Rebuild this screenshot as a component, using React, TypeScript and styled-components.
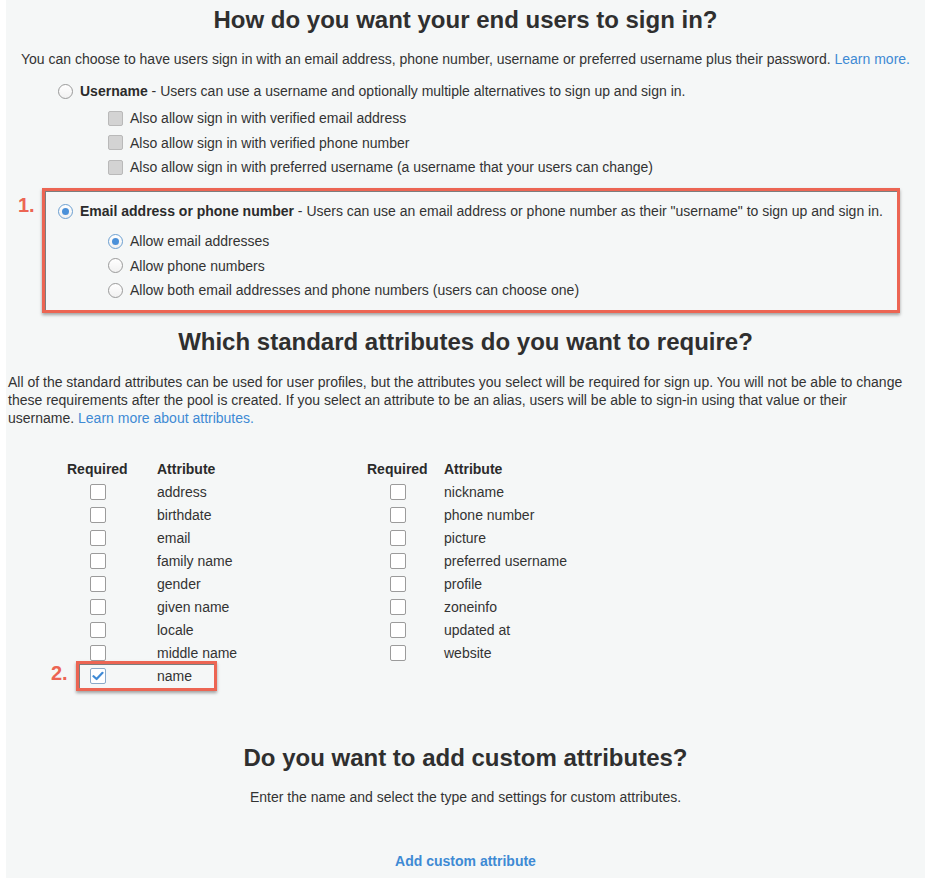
import styled, { createGlobalStyle } from 'styled-components'

const GlobalStyle = createGlobalStyle`
  body {
    margin: 0;
    background: #ffffff;
    font-family: "Liberation Sans", Arial, Helvetica, sans-serif;
    color: #333333;
  }
`

const signInChecks = [
  'Also allow sign in with verified email address',
  'Also allow sign in with verified phone number',
  'Also allow sign in with preferred username (a username that your users can change)',
]

const emailOptions = [
  { label: 'Allow email addresses', checked: true },
  { label: 'Allow phone numbers', checked: false },
  { label: 'Allow both email addresses and phone numbers (users can choose one)', checked: false },
]

const leftAttributes = ['address', 'birthdate', 'email', 'family name', 'gender', 'given name', 'locale', 'middle name', 'name']
const rightAttributes = ['nickname', 'phone number', 'picture', 'preferred username', 'profile', 'zoneinfo', 'updated at', 'website']

function Attributes({ items, gap, marked }: { items: string[]; gap: number; marked?: string }) {
  return (
    <AttrTable>
      <AttrRow $gap={gap}>
        <HeadCell>Required</HeadCell>
        <HeadCell>Attribute</HeadCell>
      </AttrRow>
      {items.map((a) => (
        <AttrRow key={a} $gap={gap}>
          {a === marked && (
            <NameHighlight>
              <Marker $small>2.</Marker>
            </NameHighlight>
          )}
          <BoxCell>
            <CheckBox $checked={a === marked}>
              {a === marked && (
                <svg width="12" height="10" viewBox="0 0 12 10">
                  <path
                    d="M1.5 5.2 L4.6 8 L10.5 1.8"
                    fill="none"
                    stroke="#3f8ad6"
                    strokeWidth="2.2"
                    strokeLinecap="round"
                    strokeLinejoin="round"
                  />
                </svg>
              )}
            </CheckBox>
          </BoxCell>
          <span>{a}</span>
        </AttrRow>
      ))}
    </AttrTable>
  )
}

export default function App() {
  return (
    <>
      <GlobalStyle />
      <Panel>
        <Title>How do you want your end users to sign in?</Title>
        <Intro>
          You can choose to have users sign in with an email address, phone number, username or preferred username plus
          their password. <Link>Learn more.</Link>
        </Intro>

        <Options>
          <OptionRow>
            <Radio />
            <span>
              <b>Username</b> - Users can use a username and optionally multiple alternatives to sign up and sign in.
            </span>
          </OptionRow>
          <SubList>
            {signInChecks.map((label) => (
              <SubRow key={label}>
                <DisabledBox />
                <span>{label}</span>
              </SubRow>
            ))}
          </SubList>
        </Options>

        <Highlight>
          <Marker>1.</Marker>
          <OptionRow>
            <Radio $checked />
            <span>
              <b>Email address or phone number</b> - Users can use an email address or phone number as their "username"
              to sign up and sign in.
            </span>
          </OptionRow>
          <SubList $tight>
            {emailOptions.map((o) => (
              <SubRow key={o.label}>
                <Radio $checked={o.checked} />
                <span>{o.label}</span>
              </SubRow>
            ))}
          </SubList>
        </Highlight>

        <Title $top={14}>Which standard attributes do you want to require?</Title>
        <Body>
          All of the standard attributes can be used for user profiles, but the attributes you select will be required
          for sign up. You will not be able to change these requirements after the pool is created. If you select an
          attribute to be an alias, users will be able to sign-in using that value or their username.{' '}
          <Link>Learn more about attributes.</Link>
        </Body>

        <Tables>
          <Attributes items={leftAttributes} gap={29} marked="name" />
          <Attributes items={rightAttributes} gap={16} />
        </Tables>

        <Title $top={58}>Do you want to add custom attributes?</Title>
        <Centered>Enter the name and select the type and settings for custom attributes.</Centered>
        <AddLink>Add custom attribute</AddLink>
      </Panel>
    </>
  )
}

const Panel = styled.main`
  margin-left: 6px;
  width: 919px;
  min-height: 878px;
  box-sizing: border-box;
  padding: 0 2px;
  background: #f5f7f7;
  font-size: 14px;
  line-height: 18px;
  overflow: hidden;
`

const Title = styled.h2<{ $top?: number }>`
  margin: ${(p) => p.$top ?? 5}px 0 0;
  text-align: center;
  font-size: 24px;
  line-height: 30px;
  font-weight: 700;
  color: #2f2f2f;
`

const Intro = styled.p`
  margin: 15px 0 0;
  text-align: center;
  white-space: nowrap;
`

const Link = styled.a`
  color: #3e8ad4;
  cursor: pointer;
`

const Options = styled.div`
  margin: 13px 0 0 50px;
`

const OptionRow = styled.div`
  display: flex;
  align-items: center;
  gap: 7px;
  height: 20px;
  b {
    font-weight: 700;
    color: #2b2b2b;
  }
`

const SubList = styled.div<{ $tight?: boolean }>`
  margin: ${(p) => (p.$tight ? 10 : 7)}px 0 0 50px;
  display: flex;
  flex-direction: column;
  gap: 4.5px;
`

const SubRow = styled.div`
  display: flex;
  align-items: center;
  gap: 7px;
  height: 20px;
`

const Radio = styled.span<{ $checked?: boolean }>`
  position: relative;
  flex: none;
  width: 15px;
  height: 15px;
  box-sizing: border-box;
  border-radius: 50%;
  border: 1px solid ${(p) => (p.$checked ? '#6b9fd1' : '#9a9a9a')};
  background: linear-gradient(#ffffff, #f1f1f1);
  &::after {
    content: '';
    display: ${(p) => (p.$checked ? 'block' : 'none')};
    position: absolute;
    left: 3px;
    top: 3px;
    width: 7px;
    height: 7px;
    border-radius: 50%;
    background: #4a90d9;
  }
`

const DisabledBox = styled.span`
  flex: none;
  width: 15px;
  height: 15px;
  box-sizing: border-box;
  border: 1px solid #b9b9b9;
  border-radius: 2px;
  background: #d3d3d3;
`

const Highlight = styled.section`
  position: relative;
  margin: 11px 0 0 34px;
  width: 858px;
  box-sizing: border-box;
  padding: 10px 0 10px 13px;
  border: 3px solid #ec6553;
  box-shadow: inset 1px 1px 0 #7d7d7d, 0 2px 3px rgba(0, 0, 0, 0.35);
`

const Marker = styled.span<{ $small?: boolean }>`
  position: absolute;
  left: ${(p) => (p.$small ? -28 : -27)}px;
  top: ${(p) => (p.$small ? -2 : 3)}px;
  font-size: 20px;
  line-height: 22px;
  font-weight: 700;
  color: #ec6553;
`

const Body = styled.p`
  margin: 16px 0 0;
  padding-right: 8px;
`

const Tables = styled.div`
  display: flex;
  margin: 33px 0 0 59px;
`

const AttrTable = styled.div`
  display: flex;
  flex-direction: column;
  gap: 5px;
  width: 300px;
`

const AttrRow = styled.div<{ $gap: number }>`
  position: relative;
  display: grid;
  grid-template-columns: 61px auto;
  column-gap: ${(p) => p.$gap}px;
  align-items: center;
  height: 18px;
`

const HeadCell = styled.span`
  font-weight: 700;
  color: #2b2b2b;
`

const BoxCell = styled.div`
  display: flex;
  justify-content: center;
  align-items: center;
`

const CheckBox = styled.span<{ $checked?: boolean }>`
  display: flex;
  align-items: center;
  justify-content: center;
  width: 16px;
  height: 16px;
  box-sizing: border-box;
  border: 1px solid ${(p) => (p.$checked ? '#8aa9c8' : '#9b9b9b')};
  border-radius: 2px;
  background: #ffffff;
`

const NameHighlight = styled.div`
  position: absolute;
  left: 9px;
  top: -6px;
  width: 141px;
  height: 30px;
  box-sizing: border-box;
  border: 3px solid #ec6553;
  box-shadow: inset 1px 1px 0 #7d7d7d, 0 2px 3px rgba(0, 0, 0, 0.35);
  pointer-events: none;
`

const Centered = styled.p`
  margin: 15px 0 0;
  text-align: center;
`

const AddLink = styled.a`
  display: block;
  margin-top: 46px;
  text-align: center;
  font-weight: 700;
  color: #3e8ad4;
`
